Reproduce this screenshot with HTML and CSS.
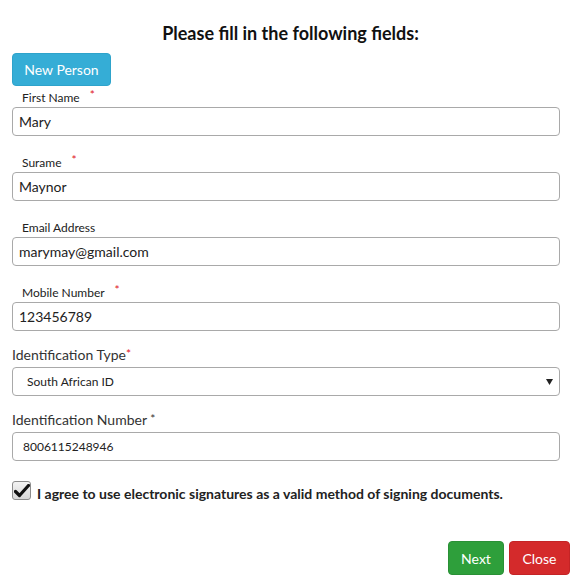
FILE: index.html
```html
<!DOCTYPE html>
<html>
<head>
<meta charset="utf-8">
<link rel="stylesheet" href="styles.css">
</head>
<body>
<div class="page">
  <h1 class="title">Please fill in the following fields:</h1>
  <div class="form">
    <button class="btn btn-info new-person">New Person</button>
    <div class="field first">
      <label class="lbl-small">First Name <span class="req">*</span></label>
      <input class="input" type="text" value="Mary">
    </div>
    <div class="field">
      <label class="lbl-small">Surame <span class="req">*</span></label>
      <input class="input" type="text" value="Maynor">
    </div>
    <div class="field">
      <label class="lbl-small">Email Address</label>
      <input class="input" type="text" value="marymay@gmail.com">
    </div>
    <div class="field">
      <label class="lbl-small">Mobile Number <span class="req">*</span></label>
      <input class="input" type="text" value="123456789">
    </div>
    <div class="field big">
      <label class="lbl-big">Identification Type<span class="req2">*</span></label>
      <div class="select">
        <span>South African ID</span>
        <svg class="caret" width="7" height="6" viewBox="0 0 7 6"><path d="M0 0H7L3.5 6Z" fill="#222"/></svg>
      </div>
    </div>
    <div class="field big">
      <label class="lbl-big">Identification Number <span class="req3">*</span></label>
      <input class="input small-input" type="text" value="8006115248946">
    </div>
    <div class="agree">
      <span class="checkbox">
        <svg width="16" height="14" viewBox="0 0 16 14"><path d="M1.5 7.5L5.5 11.5L14.5 1.5" fill="none" stroke="#111" stroke-width="3.2" stroke-linecap="round" stroke-linejoin="round"/></svg>
      </span>
      <span class="agree-text">I agree to use electronic signatures as a valid method of signing documents.</span>
    </div>
  </div>
  <div class="actions">
    <button class="btn btn-success">Next</button>
    <button class="btn btn-danger">Close</button>
  </div>
</div>
</body>
</html>
```

FILE: styles.css
```css
* { box-sizing: border-box; }
html, body { margin: 0; padding: 0; background: #fff; }
body { font-family: Lato, "Open Sans", sans-serif; color: #222; }
.page { width: 581px; padding-top: 22px; }
.title {
  margin: 0;
  font-size: 18px;
  line-height: 22px;
  font-weight: 700;
  text-align: center;
  color: #111;
}
.form { width: 548px; margin-left: 12px; margin-top: 9px; }
.btn {
  font-family: Lato, sans-serif;
  font-size: 14px;
  color: #fff;
  border: 1px solid transparent;
  border-radius: 4px;
  padding: 0;
  height: 34px;
  white-space: nowrap;
  cursor: pointer;
}
.btn-info { background: #35add6; border-color: #2ea3cb; width: 99px; height: 33px; }
.btn-success { background: #2e9f3b; border-color: #2a9036; width: 56px; }
.btn-danger { background: #d42a2b; border-color: #c42426; width: 61px; }
.new-person { display: block; }
.field { margin-top: 20px; }
.field.first { margin-top: 5px; }
.field.big { margin-top: 15px; }
.lbl-small {
  display: block;
  font-size: 12px;
  line-height: 14px;
  padding-left: 10px;
  color: #222;
  margin-bottom: 2px;
}
.lbl-small .req { color: #e0141e; margin-left: 7px; font-size: 12px; position: relative; top: -3px; }
.lbl-big {
  display: block;
  font-size: 14px;
  line-height: 17px;
  color: #333;
  margin-bottom: 3px;
}
.req2 { color: #e0141e; font-size: 12px; position: relative; top: -2px; }
.req3 { color: #333; font-size: 12px; position: relative; top: -2px; }
.input {
  display: block;
  width: 548px;
  height: 29px;
  border: 1px solid #a9a9a9;
  border-radius: 4px;
  padding: 0 6px;
  font-family: Lato, sans-serif;
  font-size: 14px;
  color: #222;
  background: #fff;
}
.small-input { font-size: 12px; padding-left: 10px; }
.select {
  display: flex;
  align-items: center;
  justify-content: space-between;
  width: 548px;
  height: 29px;
  border: 1px solid #a9a9a9;
  border-radius: 4px;
  padding: 0 6px 0 14px;
  font-size: 12px;
  color: #222;
}
.caret { margin-top: 1px; }
.agree { display: flex; align-items: center; margin-top: 20px; gap: 6px; }
.checkbox {
  display: flex;
  align-items: center;
  justify-content: center;
  width: 19px;
  height: 19px;
  border: 1px solid #8c8c8c;
  border-radius: 3px;
  background: linear-gradient(#f3f3f3, #d8d8d8);
}
.agree-text { font-size: 14px; font-weight: 700; color: #222; position: relative; top: 3px; }
.actions { display: flex; justify-content: flex-end; gap: 5px; width: 570px; margin-top: 41px; }
```
